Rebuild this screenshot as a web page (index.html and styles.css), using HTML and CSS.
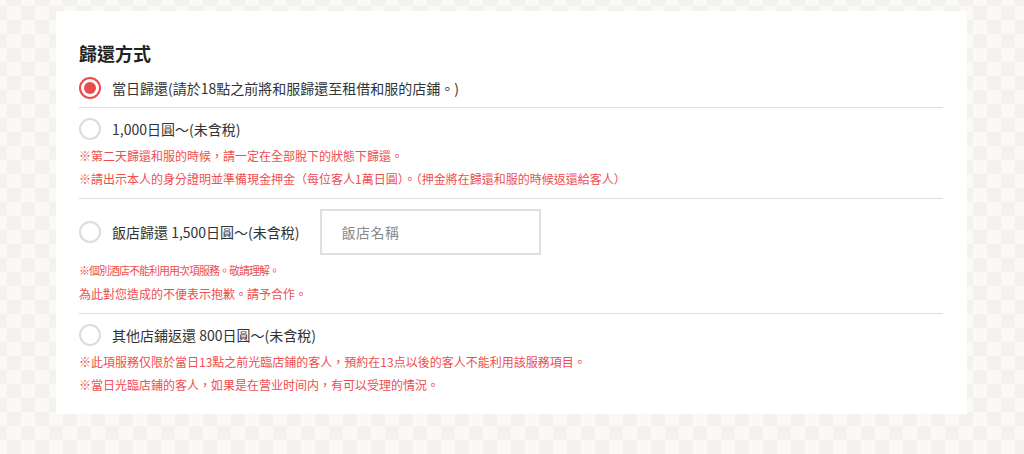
FILE: index.html
```html
<!DOCTYPE html>
<html lang="zh-TW">
<head>
  <meta charset="UTF-8">
  <meta name="viewport" content="width=device-width, initial-scale=1.0">
  <title>歸還方式</title>
  <link rel="stylesheet" href="styles.css">
</head>
<body>
  <div class="card">
    <h2 class="title">歸還方式</h2>

    <div class="option">
      <label class="row">
        <input type="radio" name="return" checked>
        <span class="radio"></span>
        <span class="label">當日歸還(請於18點之前將和服歸還至租借和服的店鋪。)</span>
      </label>
    </div>

    <div class="option">
      <label class="row">
        <input type="radio" name="return">
        <span class="radio"></span>
        <span class="label">1,000日圓～(未含稅)</span>
      </label>
      <div class="notes">
        <p>※第二天歸還和服的時候，請一定在全部脫下的狀態下歸還。</p>
        <p>※請出示本人的身分證明並準備現金押金（每位客人1萬日圓）。（押金將在歸還和服的時候返還給客人）</p>
      </div>
    </div>

    <div class="option">
      <div class="row">
        <label class="row">
          <input type="radio" name="return">
          <span class="radio"></span>
          <span class="label">飯店歸還 1,500日圓～(未含稅)</span>
        </label>
        <input type="text" class="hotel-input" placeholder="飯店名稱">
      </div>
      <div class="notes">
        <p class="tight">※個別酒店不能利用用次項服務。敬請理解。</p>
        <p>為此對您造成的不便表示抱歉。請予合作。</p>
      </div>
    </div>

    <div class="option last">
      <label class="row">
        <input type="radio" name="return">
        <span class="radio"></span>
        <span class="label">其他店鋪返還 800日圓～(未含稅)</span>
      </label>
      <div class="notes">
        <p>※此項服務仅限於當日13點之前光臨店鋪的客人，預約在13点以後的客人不能利用該服務項目。</p>
        <p>※當日光臨店鋪的客人，如果是在营业时间内，有可以受理的情況。</p>
      </div>
    </div>
  </div>
</body>
</html>
```

FILE: styles.css
```css
/* Page background: soft checker pattern */
body {
  margin: 0;
  padding: 11px 57px 40px 56px;
  font-family: "Noto Sans CJK TC", "Noto Sans", sans-serif;
  color: #333;
  background-color: #faf9f6;
  background-image:
    linear-gradient(45deg, #f3f2ee 25%, transparent 25%, transparent 75%, #f3f2ee 75%),
    linear-gradient(45deg, #f3f2ee 25%, transparent 25%, transparent 75%, #f3f2ee 75%);
  background-size: 28px 28px;
  background-position: 7px 6px, 21px 20px;
}

/* White form card */
.card {
  background: #fff;
  padding: 29px 24px 10px 23px;
}

.title {
  margin: 0 0 1px;
  font-size: 18px;
  line-height: 26px;
  font-weight: 700;
  color: #222;
}

.option {
  padding: 10px 0 8px;
  border-bottom: 1px solid #ddd;
}

.option.last {
  border-bottom: none;
}

.row {
  display: flex;
  align-items: center;
  cursor: pointer;
}

.row input[type="radio"] {
  display: none;
}

/* Custom radio */
.radio {
  box-sizing: border-box;
  width: 22px;
  height: 22px;
  border: 2px solid #dcdcdc;
  border-radius: 50%;
  margin-right: 11px;
  flex-shrink: 0;
  position: relative;
}

input:checked + .radio {
  border-color: #e94b4f;
}

input:checked + .radio::after {
  content: '';
  position: absolute;
  top: 3px;
  left: 3px;
  width: 12px;
  height: 12px;
  border-radius: 50%;
  background: #e94b4f;
}

.label {
  font-size: 14px;
  line-height: 22px;
  color: #333;
}

.hotel-input {
  box-sizing: border-box;
  width: 221px;
  height: 46px;
  margin-left: 20px;
  padding: 0 20px;
  border: 2px solid #e0e0e0;
  font-family: "Noto Sans CJK TC", sans-serif;
  font-size: 14px;
  letter-spacing: 0.5px;
  outline: none;
}

.hotel-input::placeholder {
  color: #8a8a8a;
}

.notes {
  margin-top: 4px;
}

.notes p {
  margin: 0;
  font-size: 12px;
  line-height: 23px;
  color: #ee4e50;
}

/* this line is set narrower on the original page */
.notes p.tight {
  font-size: 11px;
  letter-spacing: -1px;
}
```
